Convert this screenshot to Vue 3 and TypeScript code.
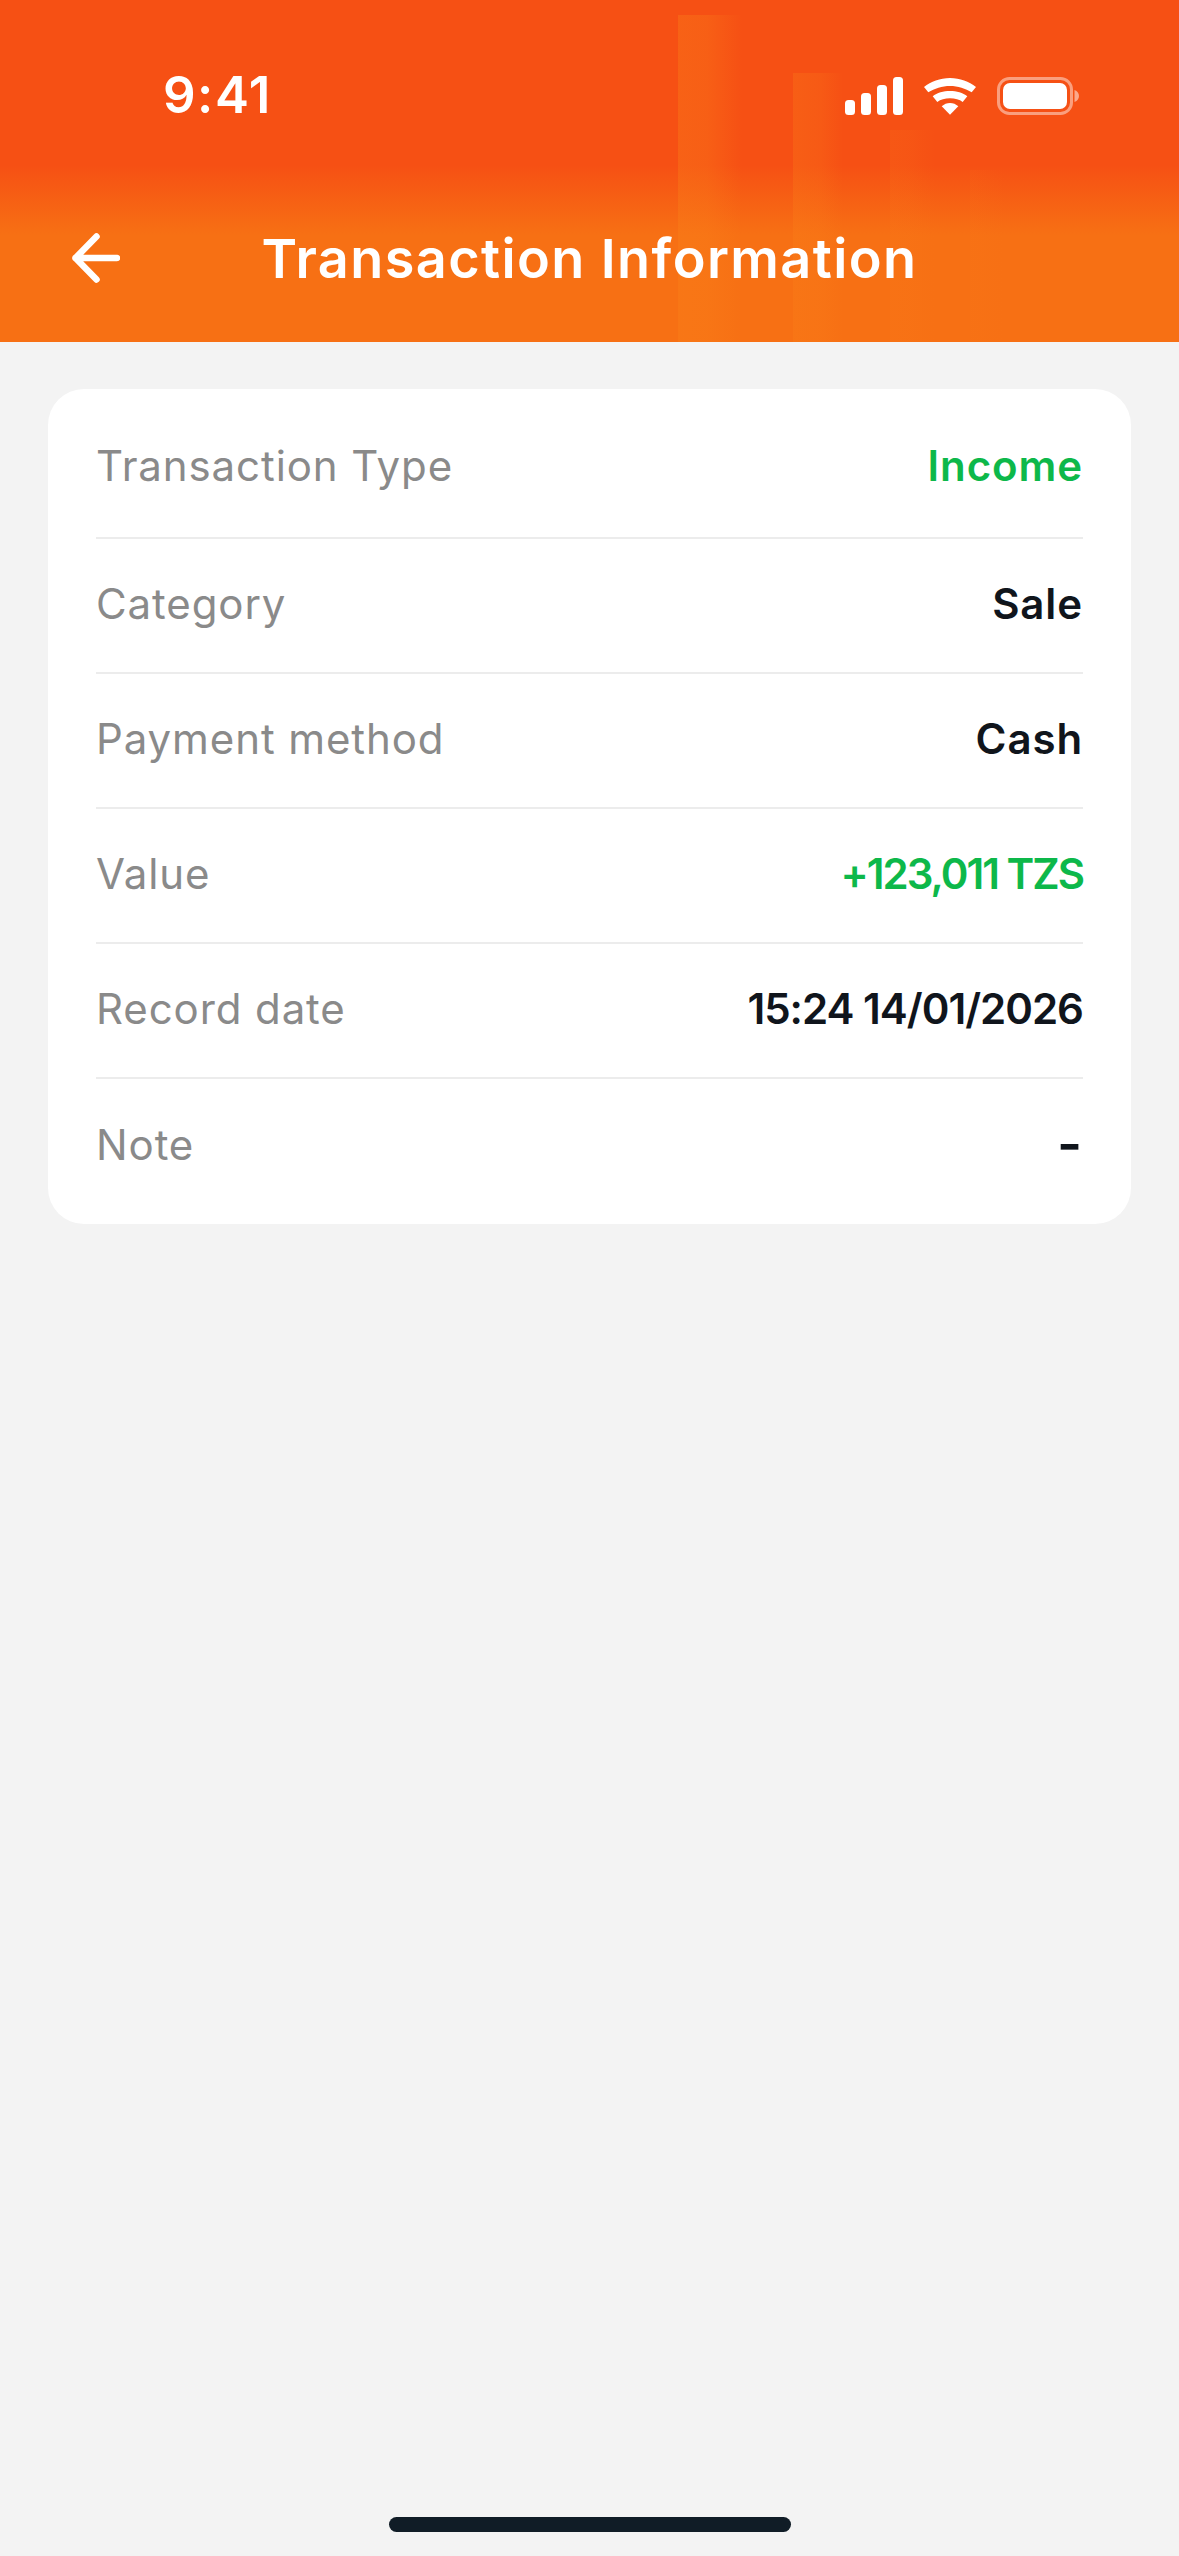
<template>
  <div class="screen">
    <header class="header">
      <div class="status-bar">
        <span class="time">9:41</span>
        <div class="status-icons">
          <svg class="signal" width="58" height="38" viewBox="0 0 58 38" fill="#fff">
            <rect x="0" y="23" width="10" height="15" rx="3.5" />
            <rect x="16" y="16" width="10" height="22" rx="3.5" />
            <rect x="32" y="8" width="10" height="30" rx="3.5" />
            <rect x="48" y="0" width="10" height="38" rx="3.5" />
          </svg>
          <svg class="wifi" width="52" height="37" viewBox="0 0 52 37" fill="#fff">
            <path d="M0 9 C7 3.5 16 0 26 0 C36 0 45 3.5 52 9 L47.7 14.3 C41.5 10.5 34 8 26 8 C18 8 10.5 10.5 4.3 14.3 Z" />
            <path d="M8.7 18.3 C13 14.8 19.5 13 26 13 C32.5 13 39 14.8 43.3 18.3 L38.7 24 C35.5 21.6 31 20.3 26 20.3 C21 20.3 16.5 21.6 13.3 24 Z" />
            <path d="M26 36.7 L17.7 28.3 C20 26.2 23 25 26 25 C29 25 32 26.2 34.3 28.3 Z" />
          </svg>
          <svg class="battery" width="82" height="38" viewBox="0 0 82 38" fill="none">
            <rect x="1.5" y="1.5" width="73" height="35" rx="11" stroke="#fff" stroke-opacity=".45" stroke-width="3" />
            <rect x="6" y="6" width="64" height="26" rx="7" fill="#fff" />
            <path d="M77.5 13 C80.5 14 82 16.5 82 19 C82 21.5 80.5 24 77.5 25 Z" fill="#fff" fill-opacity=".5" />
          </svg>
        </div>
      </div>
      <div class="nav-bar">
        <svg class="back" width="48" height="50" viewBox="0 0 48 50" fill="none">
          <path d="M24.5 3.5 L3.5 25 L24.5 46.5 M3.5 25 H45" stroke="#fff" stroke-width="6.5" stroke-linecap="round" stroke-linejoin="round" />
        </svg>
        <h1 class="title">Transaction Information</h1>
      </div>
    </header>

    <main class="content">
      <section class="card">
        <div v-for="row in rows" :key="row.label" class="row">
          <span class="label">{{ row.label }}</span>
          <span class="value" :class="row.cls">{{ row.value }}</span>
        </div>
      </section>
    </main>

    <div class="home-bar"></div>
  </div>
</template>

<script setup lang="ts">
type Row = { label: string; value: string; cls?: string };

const rows: Row[] = [
  { label: 'Transaction Type', value: 'Income', cls: 'green' },
  { label: 'Category', value: 'Sale' },
  { label: 'Payment method', value: 'Cash' },
  { label: 'Value', value: '+123,011 TZS', cls: 'green amount' },
  { label: 'Record date', value: '15:24 14/01/2026', cls: 'date' },
  { label: 'Note', value: '-', cls: 'dash' },
];
</script>

<style>
html, body { margin: 0; background: #f3f3f3; }
</style>

<style scoped>
.screen {
  width: 1179px;
  height: 2556px;
  display: flex;
  flex-direction: column;
  overflow: hidden;
  background: #f3f3f3;
  font-family: Inter, "Liberation Sans", sans-serif;
}
.header {
  position: relative;
  height: 342px;
  flex: none;
  background: linear-gradient(180deg, #f65014 0, #f65014 165px, #f77014 235px, #f77014 100%);
}
/* faint vertical streaks in the header artwork */
.header::before {
  content: "";
  position: absolute;
  inset: 0;
  background-repeat: no-repeat;
  background-image:
    linear-gradient(90deg, rgba(250, 130, 25, .35), rgba(250, 130, 25, .3) 45%, transparent),
    linear-gradient(90deg, rgba(250, 130, 25, .28), rgba(250, 130, 25, .2) 55%, transparent),
    linear-gradient(90deg, rgba(250, 125, 25, .16), rgba(250, 125, 25, .12) 45%, transparent),
    linear-gradient(90deg, rgba(250, 125, 25, .1), transparent);
  background-size: 64px 327px, 50px 269px, 45px 212px, 35px 172px;
  background-position: 678px 15px, 793px 73px, 890px 130px, 970px 170px;
}
.status-bar {
  position: relative;
  height: 194px;
  box-sizing: border-box;
  padding: 69px 100px 0 163px;
  display: flex;
  justify-content: space-between;
  align-items: flex-start;
  color: #fff;
}
.time {
  font-size: 51px;
  font-weight: 600;
  line-height: 52px;
  letter-spacing: 1.5px;
}
.status-icons {
  display: flex;
  align-items: center;
  gap: 21px;
  margin-top: 8px;
}
.nav-bar {
  position: relative;
  display: flex;
  align-items: center;
  justify-content: center;
  height: 130px;
}
.back {
  position: absolute;
  left: 72px;
  top: 39px;
}
.title {
  margin: 0;
  font-size: 54px;
  font-weight: 600;
  color: #fff;
  line-height: 60px;
  letter-spacing: 1.4px;
}
.content {
  flex: 1;
  padding: 47px 48px 0;
}
.card {
  background: #fff;
  border-radius: 36px;
  padding: 0 48px;
}
.row {
  height: 135px;
  box-sizing: border-box;
  padding-bottom: 5px;
  display: flex;
  align-items: center;
  justify-content: space-between;
  border-bottom: 2px solid #ececec;
}
.row:first-child {
  height: 150px;
  padding-top: 10px;
}
.row:last-child {
  height: 145px;
  padding-bottom: 15px;
  border-bottom: 0;
}
.label {
  font-size: 42px;
  letter-spacing: .9px;
  color: #8a8a8a;
}
.value {
  font-size: 42px;
  font-weight: 600;
  letter-spacing: .9px;
  color: #10151c;
}
.value.green {
  color: #0db84a;
}
.value.amount {
  letter-spacing: -2px;
}
.value.date {
  letter-spacing: -1px;
}
.value.dash {
  font-size: 54px;
  line-height: 42px;
}
.home-bar {
  width: 402px;
  height: 15px;
  flex: none;
  margin: 0 auto 24px;
  border-radius: 8px;
  background: #101c26;
}
</style>
